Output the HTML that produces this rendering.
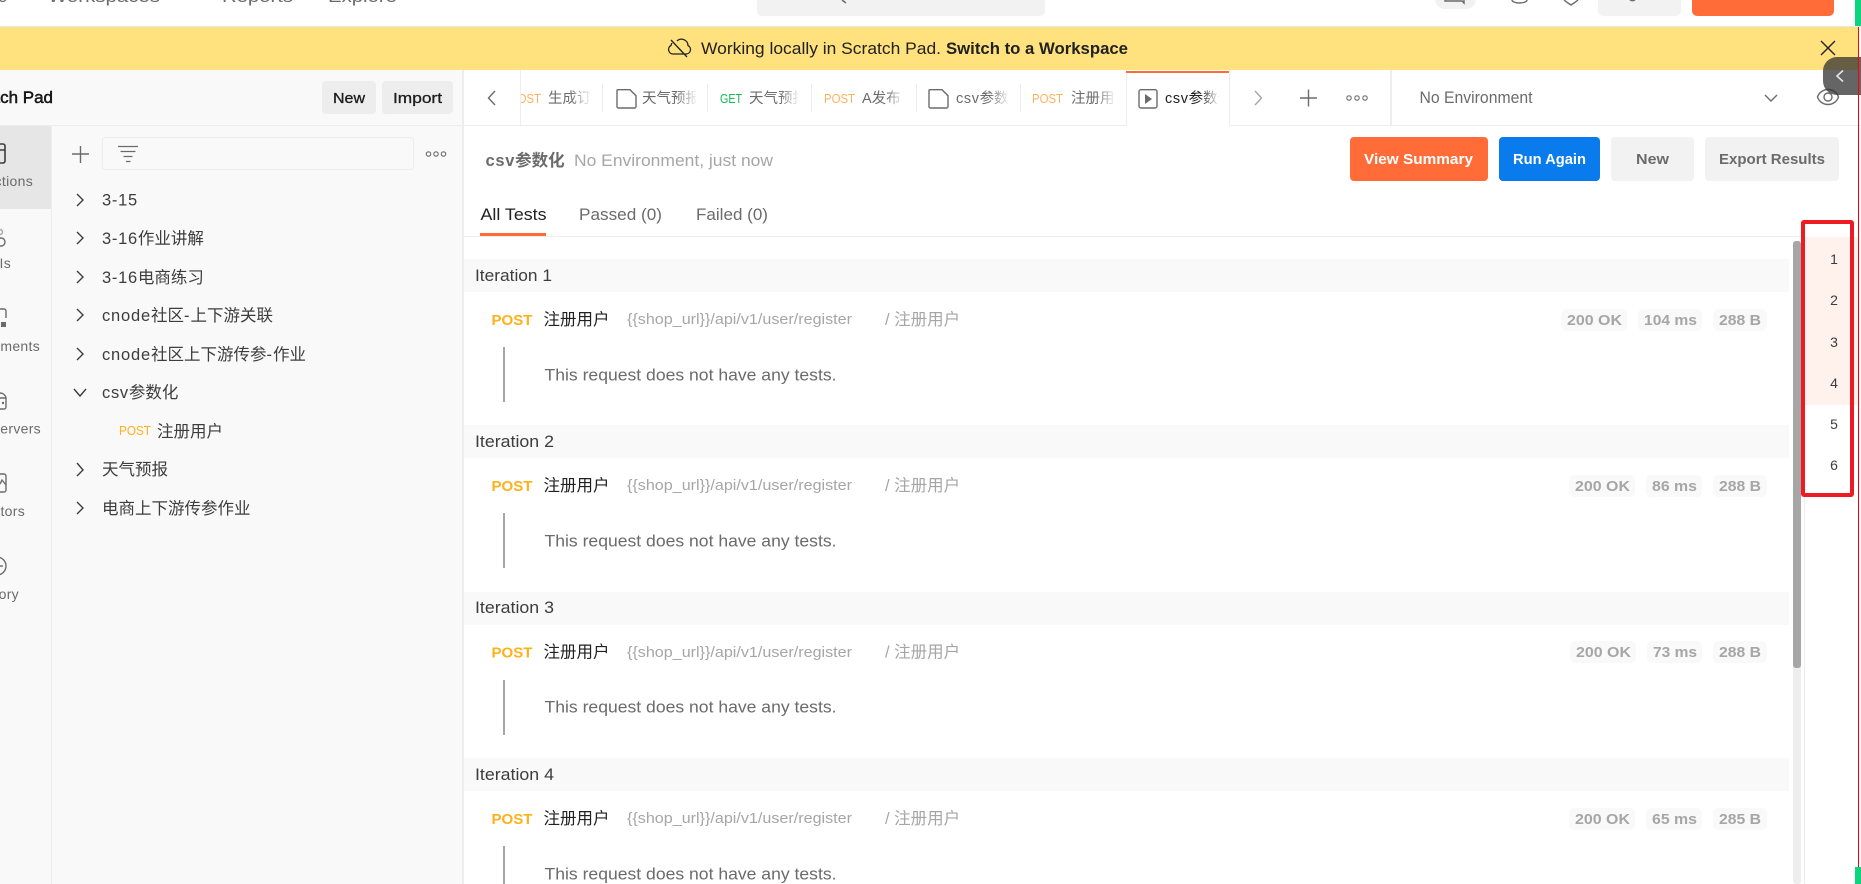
<!DOCTYPE html>
<html lang="zh"><head><meta charset="utf-8"><title>Postman</title>
<style>
html,body{margin:0;padding:0;background:#fff;width:1861px;height:884px;overflow:hidden}
svg{display:block}
text{font-family:"Liberation Sans","Noto Sans CJK SC",sans-serif;font-size:16.5px;fill:#3d3d3d}
.m{stroke:currentColor;stroke-width:.35}
.g{fill:#6b6b6b}.l{fill:#a6a6a6}.d{fill:#212121}
.p{fill:#ffb119}
.ic{fill:none;stroke:#6b6b6b;stroke-width:1.4}
.ch{fill:none;stroke:#3d3d3d;stroke-width:1.4}
.n{font-size:14px;letter-spacing:.3px;fill:#6b6b6b}
.t{font-size:14.5px;fill:#6b6b6b}
.b{font-size:14.5px;font-weight:700;fill:#a6a6a6}
.w{font-size:15px;font-weight:700;fill:#fff}
</style></head><body>
<svg width="1861" height="884" viewBox="0 0 1861 884" xmlns="http://www.w3.org/2000/svg">
<defs>
<linearGradient id="f"><stop offset="0" stop-color="#fff" stop-opacity="0"/><stop offset="1" stop-color="#fff"/></linearGradient>
<clipPath id="c5"><rect x="950" y="80" width="60" height="40"/></clipPath>
<clipPath id="c7"><rect x="1160" y="80" width="60" height="40"/></clipPath>
</defs>
<rect width="1861" height="884" fill="#fff"/>

<!-- top bar -->
<text class="g" x="-2" y="2">e</text>
<text class="g" x="48" y="2" textLength="112" lengthAdjust="spacingAndGlyphs">Workspaces</text>
<text class="g" x="222" y="2" textLength="71" lengthAdjust="spacingAndGlyphs">Reports</text>
<text class="g" x="328" y="2" textLength="69" lengthAdjust="spacingAndGlyphs">Explore</text>
<rect x="757" y="-8" width="288" height="24" rx="5" fill="#f2f2f2"/>
<path d="M842 0 L846 3" stroke="#6b6b6b" stroke-width="1.5" fill="none"/>
<rect x="1435" y="-12" width="41" height="21" rx="10" fill="#f2f2f2"/>
<path d="M1445 0 V1 H1462 L1464 3 V0" class="ic"/>
<path d="M1512 0 a7.5 3 0 0 0 15 0" class="ic"/>
<path d="M1564 0 L1568 3 L1571 5 L1574 3 L1578 0" class="ic"/>
<rect x="1598" y="-8" width="83" height="24" rx="5" fill="#f2f2f2"/>
<path d="M1630 0 a3 1.5 0 0 0 5 0" class="ic"/>
<rect x="1692" y="-8" width="142" height="24" rx="5" fill="#ff6c37"/>
<rect x="1855" y="0" width="6" height="27" fill="#0cd47f"/>
<rect x="0" y="26" width="1861" height="1" fill="#e6e6e6"/>

<!-- banner -->
<rect x="0" y="27" width="1858" height="43" fill="#ffe17d"/>
<path d="M673 54 h13.5 a4.5 4.5 0 0 0 1.5 -8.5 a6.5 6.5 0 0 0 -11 -4.5 M672 43 a6 6 0 0 0 -1 2.5 a4.5 4.5 0 0 0 2 8.5 M671 40 L687 57" fill="none" stroke="#212121" stroke-width="1.3"/>
<text class="d" x="701" y="54" textLength="240" lengthAdjust="spacingAndGlyphs">Working locally in Scratch Pad.</text>
<text class="d m" x="946" y="54" textLength="182" lengthAdjust="spacingAndGlyphs" style="font-weight:700;stroke:none">Switch to a Workspace</text>
<path d="M1821 41 L1835 55 M1835 41 L1821 55" stroke="#212121" stroke-width="1.4" fill="none"/>

<!-- sidebar -->
<rect x="0" y="70" width="463" height="814" fill="#f9f9f9"/>
<rect x="462" y="70" width="2" height="814" fill="#ededed"/>
<text class="d m" x="53" y="103" text-anchor="end" style="font-size:17px;stroke-width:.45">Scratch Pad</text>
<rect x="322" y="81" width="54" height="33" rx="4" fill="#ededed"/>
<text class="d m" x="333" y="103" textLength="32" lengthAdjust="spacingAndGlyphs" style="font-size:15px;stroke-width:.25">New</text>
<rect x="382" y="81" width="71" height="33" rx="4" fill="#ededed"/>
<text class="d m" x="393" y="103" textLength="49" lengthAdjust="spacingAndGlyphs" style="font-size:15px;stroke-width:.25">Import</text>
<rect x="0" y="125" width="1861" height="1" fill="#ededed"/>

<!-- nav rail -->
<rect x="0" y="126" width="51" height="83" fill="#e6e6e6"/>
<rect x="51" y="126" width="1" height="758" fill="#ededed"/>
<path d="M0 144 H3 a2 2 0 0 1 2 2 V161 a2 2 0 0 1 -2 2 H0 M0 150 H5" class="ic" style="stroke:#3d3d3d;stroke-width:1.6"/>
<text class="n" x="33" y="186" text-anchor="end">Collections</text>
<circle cx="1" cy="242" r="4" class="ic"/><circle cx="0" cy="232" r="2.5" class="ic" style="stroke:#a6a6a6"/>
<text class="n" x="11" y="268" text-anchor="end">APIs</text>
<path d="M0 309 H4 a2 2 0 0 1 2 2 V318" class="ic"/><rect x="1" y="322" width="5" height="5" fill="#6b6b6b"/>
<text class="n" x="40" y="351" text-anchor="end">Environments</text>
<path d="M0 393 a6 6 0 0 1 6 5 V407 a2 2 0 0 1 -2 2 H0 M0 398 H6" class="ic"/><circle cx="3" cy="403" r="1.2" fill="#6b6b6b"/>
<text class="n" x="41" y="433.500" text-anchor="end">Mock Servers</text>
<path d="M0 474 H4 a2 2 0 0 1 2 2 V490 a2 2 0 0 1 -2 2 H0 M0 484 L2 480 L6 485" class="ic"/>
<text class="n" x="25" y="516" text-anchor="end">Monitors</text>
<circle cx="-3" cy="566" r="9" class="ic"/><path d="M-1 566 H3" class="ic"/>
<text class="n" x="19" y="599" text-anchor="end">History</text>

<!-- sidebar toolbar -->
<path d="M72 154 H89 M80.500 146 V163" class="ic"/>
<rect x="102.500" y="137.500" width="311" height="32" rx="3" fill="#f9f9f9" stroke="#ededed"/>
<path d="M118 146.500 H138 M120.500 151.500 H135.500 M123.500 156.500 H132.500 M126 161.500 H130.500" class="ic" style="stroke-width:1.2"/>
<circle cx="428.500" cy="154" r="2.200" class="ic" style="stroke-width:1.1"/><circle cx="436" cy="154" r="2.200" class="ic" style="stroke-width:1.1"/><circle cx="443.500" cy="154" r="2.200" class="ic" style="stroke-width:1.1"/>

<!-- tree -->
<path class="ch" d="M77 194 L83 200 L77 206"/><text x="102" y="205.500"><tspan letter-spacing=".7">3-15</tspan></text>
<path class="ch" d="M77 232 L83 238 L77 244"/><text x="102" y="244"><tspan letter-spacing=".7">3-16</tspan>作业讲解</text>
<path class="ch" d="M77 271 L83 277 L77 283"/><text x="102" y="283"><tspan letter-spacing=".7">3-16</tspan>电商练习</text>
<path class="ch" d="M77 309 L83 315 L77 321"/><text x="102" y="321"><tspan letter-spacing=".8">cnode</tspan>社区<tspan letter-spacing="1">-</tspan>上下游关联</text>
<path class="ch" d="M77 348 L83 354 L77 360"/><text x="102" y="360"><tspan letter-spacing=".8">cnode</tspan>社区上下游传参<tspan letter-spacing="1">-</tspan>作业</text>
<path class="ch" d="M74 389 L80 396 L86 389"/><text x="102" y="398"><tspan letter-spacing=".7">csv</tspan>参数化</text>
<text class="p" x="119" y="435" textLength="32" lengthAdjust="spacingAndGlyphs" style="font-size:12.5px">POST</text><text x="157" y="437">注册用户</text>
<path class="ch" d="M77 463 L83 470 L77 476"/><text x="102" y="475">天气预报</text>
<path class="ch" d="M77 502 L83 508 L77 514"/><text x="102" y="514">电商上下游传参作业</text>

<!-- tab strip -->
<text x="510" y="103" textLength="31" lengthAdjust="spacingAndGlyphs" style="font-size:13px;fill:#ffb15c">POST</text>
<rect x="464" y="70" width="56" height="55" fill="#fff"/>
<rect x="520" y="70" width="1" height="55" fill="#ededed"/>
<path class="ic" d="M495 91 L488.500 98 L495 105"/>
<text class="t" x="548" y="103">生成订单</text>
<rect x="570" y="80" width="22" height="40" fill="url(#f)"/><rect x="590" y="80" width="27" height="40" fill="#fff"/>
<rect x="602" y="84" width="1" height="28" fill="#ededed"/>
<path class="ic" d="M618 89.700 H630 L636 95.700 V106.500 a1.500 1.500 0 0 1 -1.500 1.500 H618.500 a1.500 1.500 0 0 1 -1.500 -1.500 V90.700 a1 1 0 0 1 1 -1 Z"/>
<text class="t" x="642" y="103">天气预报</text>
<rect x="676" y="80" width="22" height="40" fill="url(#f)"/>
<rect x="696" y="80" width="11" height="40" fill="#fff"/>
<rect x="707" y="84" width="1" height="28" fill="#ededed"/>
<text x="720" y="103" textLength="22" lengthAdjust="spacingAndGlyphs" style="font-size:13px;fill:#0cbb52">GET</text>
<text class="t" x="749" y="103">天气预报</text>
<rect x="780" y="80" width="20" height="40" fill="url(#f)"/>
<rect x="798" y="80" width="13" height="40" fill="#fff"/>
<rect x="811" y="84" width="1" height="28" fill="#ededed"/>
<text x="824" y="103" textLength="31" lengthAdjust="spacingAndGlyphs" style="font-size:13px;fill:#ffb15c">POST</text>
<text class="t" x="862" y="103">A发布会</text>
<rect x="886" y="80" width="18" height="40" fill="url(#f)"/>
<rect x="902" y="80" width="14" height="40" fill="#fff"/>
<rect x="916" y="84" width="1" height="28" fill="#ededed"/>
<path class="ic" d="M930 89.700 H942 L948 95.700 V106.500 a1.500 1.500 0 0 1 -1.500 1.500 H930.500 a1.500 1.500 0 0 1 -1.500 -1.500 V90.700 a1 1 0 0 1 1 -1 Z"/>
<text class="t" x="956" y="103" clip-path="url(#c5)"><tspan letter-spacing=".6">csv</tspan>参数化</text>
<rect x="990" y="80" width="20" height="40" fill="url(#f)"/>
<rect x="1020" y="84" width="1" height="28" fill="#ededed"/>
<text x="1032" y="103" textLength="31" lengthAdjust="spacingAndGlyphs" style="font-size:13px;fill:#ffb15c">POST</text>
<text class="t" x="1071" y="103">注册用户</text>
<rect x="1096" y="80" width="20" height="40" fill="url(#f)"/>
<rect x="1114" y="80" width="12" height="40" fill="#fff"/>
<!-- active tab -->
<rect x="1126" y="125" width="103" height="1" fill="#fff"/>
<rect x="1126" y="70" width="1" height="56" fill="#ededed"/><rect x="1229" y="70" width="1" height="56" fill="#ededed"/>
<rect x="1126" y="71" width="103" height="2" fill="#ff6c37"/>
<rect x="1139" y="89.700" width="18" height="18.300" rx="2" class="ic"/>
<path d="M1145 94 L1152 99 L1145 104 Z" fill="#6b6b6b"/>
<text class="d" x="1165" y="103" style="font-size:14.5px" clip-path="url(#c7)"><tspan letter-spacing=".6">csv</tspan>参数化</text>
<rect x="1200" y="80" width="20" height="40" fill="url(#f)"/>
<path class="ic" d="M1255 91 L1261.500 98 L1255 105" style="stroke:#a6a6a6"/>
<path class="ic" d="M1300 98 H1317 M1308.500 89.500 V106.500" />
<circle cx="1349" cy="98" r="2.200" class="ic" style="stroke-width:1.1"/><circle cx="1357" cy="98" r="2.200" class="ic" style="stroke-width:1.1"/><circle cx="1365" cy="98" r="2.200" class="ic" style="stroke-width:1.1"/>
<rect x="1390" y="70" width="2" height="55" fill="#ededed"/>
<text class="g" x="1419.500" y="103" textLength="113" lengthAdjust="spacingAndGlyphs">No Environment</text>
<path class="ic" d="M1765 95 L1771 101 L1777 95"/>
<path class="ic" d="M1817.500 97 C1821 87 1835 87 1838.500 97 C1835 107 1821 107 1817.500 97 Z"/><circle cx="1828" cy="97" r="4" class="ic"/>

<!-- summary header -->
<text class="g" x="485.500" y="166" style="font-weight:700"><tspan letter-spacing=".7">csv</tspan>参数化</text>
<text class="l" x="574" y="166" textLength="199" lengthAdjust="spacingAndGlyphs">No Environment, just now</text>
<rect x="1350" y="137" width="138" height="44" rx="4" fill="#ff6c37"/>
<text class="w" x="1364" y="164" textLength="109" lengthAdjust="spacingAndGlyphs">View Summary</text>
<rect x="1499" y="137" width="101" height="44" rx="4" fill="#097bed"/>
<text class="w" x="1513" y="164" textLength="73" lengthAdjust="spacingAndGlyphs">Run Again</text>
<rect x="1611" y="137" width="83" height="44" rx="4" fill="#f2f2f2"/>
<text class="g m" x="1636" y="164" textLength="33" lengthAdjust="spacingAndGlyphs" style="font-size:15px;font-weight:700;stroke:none">New</text>
<rect x="1705" y="137" width="134" height="44" rx="4" fill="#f2f2f2"/>
<text class="g m" x="1719" y="164" textLength="106" lengthAdjust="spacingAndGlyphs" style="font-size:15px;font-weight:700;stroke:none">Export Results</text>

<!-- results tabs -->
<text class="d" x="480.500" y="220" textLength="66" lengthAdjust="spacingAndGlyphs">All Tests</text>
<text class="g" x="579" y="220" textLength="83" lengthAdjust="spacingAndGlyphs">Passed (0)</text>
<text class="g" x="696" y="220" textLength="72" lengthAdjust="spacingAndGlyphs">Failed (0)</text>
<rect x="464" y="236" width="1341" height="1" fill="#ededed"/>
<rect x="480" y="233" width="66" height="3" fill="#ff6c37"/>

<!-- iteration 1 -->
<rect x="464" y="259" width="1325" height="33" fill="#f9f9f9"/>
<text x="475" y="281" textLength="77" lengthAdjust="spacingAndGlyphs">Iteration 1</text>
<text class="p" x="491.500" y="325" textLength="41" lengthAdjust="spacingAndGlyphs" style="font-weight:700;font-size:14.5px">POST</text>
<text class="d" x="543.500" y="325">注册用户</text>
<text class="l" x="627" y="324" textLength="225" lengthAdjust="spacingAndGlyphs" style="font-size:14.5px">{{shop_url}}/api/v1/user/register</text>
<text class="l" x="885" y="325">/ 注册用户</text>
<rect x="503" y="347" width="2" height="55" fill="#a6a6a6"/>
<text class="g" x="544.500" y="380.500" textLength="292" lengthAdjust="spacingAndGlyphs">This request does not have any tests.</text>
<rect x="1561" y="309" width="66" height="22" rx="5" fill="#f9f9f9"/><text class="b" x="1567" y="325" textLength="55" lengthAdjust="spacingAndGlyphs">200 OK</text>
<rect x="1638" y="309" width="64" height="22" rx="5" fill="#f9f9f9"/><text class="b" x="1644" y="325" textLength="53" lengthAdjust="spacingAndGlyphs">104 ms</text>
<rect x="1713" y="309" width="54" height="22" rx="5" fill="#f9f9f9"/><text class="b" x="1719" y="325" textLength="42" lengthAdjust="spacingAndGlyphs">288 B</text>

<!-- iteration 2 -->
<rect x="464" y="425" width="1325" height="33" fill="#f9f9f9"/>
<text x="475" y="447" textLength="79" lengthAdjust="spacingAndGlyphs">Iteration 2</text>
<text class="p" x="491.500" y="491" textLength="41" lengthAdjust="spacingAndGlyphs" style="font-weight:700;font-size:14.5px">POST</text>
<text class="d" x="543.500" y="491">注册用户</text>
<text class="l" x="627" y="490" textLength="225" lengthAdjust="spacingAndGlyphs" style="font-size:14.5px">{{shop_url}}/api/v1/user/register</text>
<text class="l" x="885" y="491">/ 注册用户</text>
<rect x="503" y="513" width="2" height="55" fill="#a6a6a6"/>
<text class="g" x="544.500" y="546.500" textLength="292" lengthAdjust="spacingAndGlyphs">This request does not have any tests.</text>
<rect x="1569" y="475" width="66" height="22" rx="5" fill="#f9f9f9"/><text class="b" x="1575" y="491" textLength="55" lengthAdjust="spacingAndGlyphs">200 OK</text>
<rect x="1646" y="475" width="56" height="22" rx="5" fill="#f9f9f9"/><text class="b" x="1652" y="491" textLength="45" lengthAdjust="spacingAndGlyphs">86 ms</text>
<rect x="1713" y="475" width="54" height="22" rx="5" fill="#f9f9f9"/><text class="b" x="1719" y="491" textLength="42" lengthAdjust="spacingAndGlyphs">288 B</text>

<!-- iteration 3 -->
<rect x="464" y="592" width="1325" height="33" fill="#f9f9f9"/>
<text x="475" y="613" textLength="79" lengthAdjust="spacingAndGlyphs">Iteration 3</text>
<text class="p" x="491.500" y="657.500" textLength="41" lengthAdjust="spacingAndGlyphs" style="font-weight:700;font-size:14.5px">POST</text>
<text class="d" x="543.500" y="657.500">注册用户</text>
<text class="l" x="627" y="657" textLength="225" lengthAdjust="spacingAndGlyphs" style="font-size:14.5px">{{shop_url}}/api/v1/user/register</text>
<text class="l" x="885" y="657.500">/ 注册用户</text>
<rect x="503" y="680" width="2" height="55" fill="#a6a6a6"/>
<text class="g" x="544.500" y="712.500" textLength="292" lengthAdjust="spacingAndGlyphs">This request does not have any tests.</text>
<rect x="1570" y="641" width="66" height="22" rx="5" fill="#f9f9f9"/><text class="b" x="1576" y="657" textLength="55" lengthAdjust="spacingAndGlyphs">200 OK</text>
<rect x="1647" y="641" width="55" height="22" rx="5" fill="#f9f9f9"/><text class="b" x="1653" y="657" textLength="44" lengthAdjust="spacingAndGlyphs">73 ms</text>
<rect x="1713" y="641" width="54" height="22" rx="5" fill="#f9f9f9"/><text class="b" x="1719" y="657" textLength="42" lengthAdjust="spacingAndGlyphs">288 B</text>

<!-- iteration 4 -->
<rect x="464" y="758" width="1325" height="33" fill="#f9f9f9"/>
<text x="475" y="780" textLength="79" lengthAdjust="spacingAndGlyphs">Iteration 4</text>
<text class="p" x="491.500" y="824" textLength="41" lengthAdjust="spacingAndGlyphs" style="font-weight:700;font-size:14.5px">POST</text>
<text class="d" x="543.500" y="824">注册用户</text>
<text class="l" x="627" y="823" textLength="225" lengthAdjust="spacingAndGlyphs" style="font-size:14.5px">{{shop_url}}/api/v1/user/register</text>
<text class="l" x="885" y="824">/ 注册用户</text>
<rect x="503" y="846" width="2" height="40" fill="#a6a6a6"/>
<text class="g" x="544.500" y="879.500" textLength="292" lengthAdjust="spacingAndGlyphs">This request does not have any tests.</text>
<rect x="1569" y="808" width="66" height="22" rx="5" fill="#f9f9f9"/><text class="b" x="1575" y="824" textLength="55" lengthAdjust="spacingAndGlyphs">200 OK</text>
<rect x="1646" y="808" width="56" height="22" rx="5" fill="#f9f9f9"/><text class="b" x="1652" y="824" textLength="45" lengthAdjust="spacingAndGlyphs">65 ms</text>
<rect x="1713" y="808" width="54" height="22" rx="5" fill="#f9f9f9"/><text class="b" x="1719" y="824" textLength="42" lengthAdjust="spacingAndGlyphs">285 B</text>

<!-- scrollbar -->
<rect x="1793" y="241" width="8" height="643" rx="3" fill="#ededed"/>
<rect x="1793" y="241" width="8" height="427" rx="3" fill="#a6a6a6"/>
<rect x="1804" y="237" width="1" height="647" fill="#ededed"/>

<!-- iteration navigator -->
<rect x="1805" y="237" width="53" height="168" fill="#fff1eb"/>
<text x="1834" y="264" text-anchor="middle" style="font-size:14px">1</text>
<text x="1834" y="305" text-anchor="middle" style="font-size:14px">2</text>
<text x="1834" y="347" text-anchor="middle" style="font-size:14px">3</text>
<text x="1834" y="388" text-anchor="middle" style="font-size:14px">4</text>
<text x="1834" y="429" text-anchor="middle" style="font-size:14px">5</text>
<text x="1834" y="470" text-anchor="middle" style="font-size:14px">6</text>
<rect x="1803" y="222" width="49" height="273" fill="none" stroke="#ed1c24" stroke-width="4" rx="1"/>

<!-- overlays -->
<path d="M1861 57 H1837 a14 14 0 0 0 -14 14 V81 a14 14 0 0 0 14 14 H1861 Z" fill="#323232" fill-opacity=".75"/>
<path d="M1843 70.500 L1837 76 L1843 81.500" fill="none" stroke="#e6e6e6" stroke-width="1.6"/>
<rect x="1858" y="27" width="1" height="840" fill="#ff0000"/>
<rect x="1855" y="867" width="6" height="17" fill="#0cd47f"/>
</svg>
</body></html>
